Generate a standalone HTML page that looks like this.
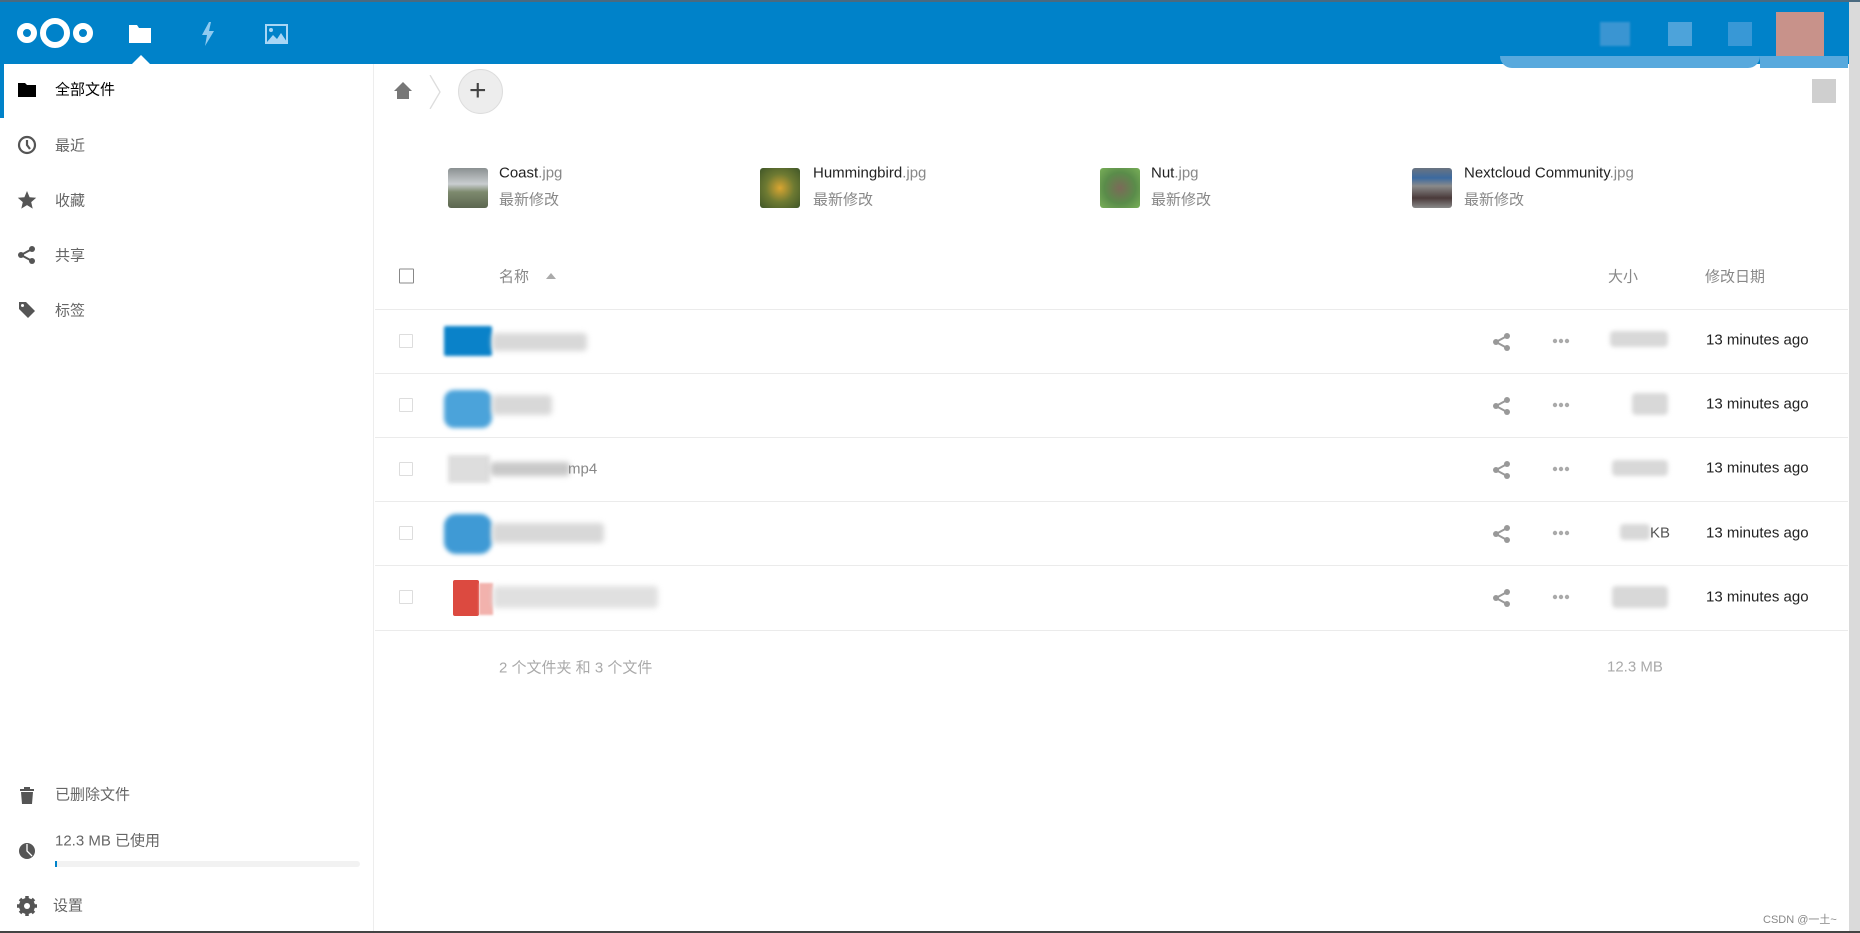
<!DOCTYPE html>
<html><head><meta charset="utf-8"><style>
*{margin:0;padding:0;box-sizing:border-box}
body{width:1860px;height:933px;overflow:hidden;background:#fff;font-family:"Liberation Sans","Noto Sans CJK SC",sans-serif;font-size:15px;color:#222;position:relative}
.hdr{position:absolute;left:0;top:0;width:1860px;height:64px;background:#0082c9;border-top:2px solid #4a6a80}
.a{position:absolute}
.side{position:absolute;left:0;top:64px;width:374px;height:868px;border-right:1px solid #ededed}
.nav{position:absolute;left:55px;color:#666;font-size:15px;transform:translateY(-50%)}
.ico{position:absolute;left:17px;width:20px;height:20px;transform:translateY(-50%)}
.t{position:absolute;transform:translateY(-50%);white-space:nowrap}
.line{position:absolute;left:375px;width:1473px;height:1px;background:#ebebeb}
.cb{position:absolute;left:399px;width:14px;height:14px;border:1px solid #ddd;border-radius:1px;transform:translateY(-50%)}
.blur{position:absolute;filter:blur(3px);background:#d8d8d8;border-radius:4px}
.dots{position:absolute;left:1551px;color:#aaa;font-size:14px;letter-spacing:-1px;transform:translateY(-60%)}
</style></head><body>
<div class="hdr">
 <svg class="a" style="left:15px;top:12px" width="80" height="40" viewBox="0 0 80 40"><g fill="none" stroke="#fff" stroke-width="6"><circle cx="12" cy="19" r="7"/><circle cx="40" cy="19" r="12"/><circle cx="68" cy="19" r="7"/></g></svg>
 <svg class="a" style="left:129px;top:21px" width="22" height="20" viewBox="0 0 22 20"><path d="M0 2h8l2 3h12v15H0z" fill="#fff"/></svg>
 <svg class="a" style="left:130px;top:53px" width="22" height="11" viewBox="0 0 22 11"><path d="M0 11L11 0l11 11z" fill="#fff"/></svg>
 <svg class="a" style="left:200px;top:20px" width="16" height="24" viewBox="0 0 16 24"><path d="M9 0L2 13h5l-2 11 9-15H9l2-9z" fill="#8fcaf0"/></svg>
 <svg class="a" style="left:265px;top:22px" width="23" height="20" viewBox="0 0 23 20"><rect x="1" y="1" width="21" height="18" fill="none" stroke="#a8d6f5" stroke-width="2"/><circle cx="6" cy="6" r="2" fill="#a8d6f5"/><path d="M2 18l6-7 4 4 4-6 6 9z" fill="#a8d6f5"/></svg>
 <div class="a" style="left:1600px;top:20px;width:30px;height:24px;background:#3a95d2;filter:blur(1px)"></div>
 <div class="a" style="left:1668px;top:20px;width:24px;height:24px;background:#4da3da"></div>
 <div class="a" style="left:1728px;top:20px;width:24px;height:24px;background:#3898d6"></div>
 <div class="a" style="left:1776px;top:10px;width:48px;height:44px;background:#c8928a"></div>
</div>
<div class="a" style="left:1500px;top:56px;width:260px;height:12px;background:#58a9dd;border-radius:0 0 30px 30px"></div>
<div class="a" style="left:1760px;top:56px;width:88px;height:12px;background:#58a9dd"></div>
<div class="a" style="left:1849px;top:2px;width:11px;height:930px;background:#dadada"></div>

<div class="side">
 <div class="a" style="left:0;top:0;width:4px;height:54px;background:#0082c9"></div>
</div>
<svg class="ico" style="top:90px" viewBox="0 0 20 20"><path d="M1 3h7l2 2h9v12H1z" fill="#000"/></svg>
<div class="nav" style="top:89px;color:#000">全部文件</div>
<svg class="ico" style="top:145px" viewBox="0 0 20 20"><circle cx="10" cy="10" r="8" fill="none" stroke="#555" stroke-width="2.2"/><path d="M10 5v5l3 4" fill="none" stroke="#555" stroke-width="2.2"/></svg>
<div class="nav" style="top:145px">最近</div>
<svg class="ico" style="top:200px" viewBox="0 0 20 20"><path d="M10 1l2.6 6.2 6.6.5-5 4.4 1.5 6.5L10 15.1l-5.7 3.5 1.5-6.5-5-4.4 6.6-.5z" fill="#555"/></svg>
<div class="nav" style="top:200px">收藏</div>
<svg class="ico" style="top:255px" viewBox="0 0 20 20"><circle cx="15" cy="4" r="3" fill="#555"/><circle cx="4" cy="10" r="3" fill="#555"/><circle cx="15" cy="16" r="3" fill="#555"/><path d="M15 4L4 10l11 6" fill="none" stroke="#555" stroke-width="2"/></svg>
<div class="nav" style="top:255px">共享</div>
<svg class="ico" style="top:310px" viewBox="0 0 20 20"><path d="M2 2h7l9 9-7 7-9-9z" fill="#555"/><circle cx="5.5" cy="5.5" r="1.5" fill="#fff"/></svg>
<div class="nav" style="top:310px">标签</div>
<svg class="ico" style="top:795px" viewBox="0 0 20 20"><path d="M3 4h14v2H3zM7 2h6v2H7zM4 7h12l-1 12H5z" fill="#555"/></svg>
<div class="nav" style="top:794px">已删除文件</div>
<svg class="ico" style="top:851px" viewBox="0 0 20 20"><circle cx="10" cy="10" r="8" fill="#555"/><path d="M10 3v7l5 5" fill="none" stroke="#fff" stroke-width="1.3"/></svg>
<div class="nav" style="top:840px">12.3 MB 已使用</div>
<div class="a" style="left:55px;top:861px;width:305px;height:6px;background:#f2f2f2;border-radius:3px"><div style="width:2px;height:6px;background:#0082c9"></div></div>
<svg class="ico" style="top:906px" viewBox="0 0 20 20"><circle cx="10" cy="10" r="6" fill="none" stroke="#555" stroke-width="4"/><g stroke="#555" stroke-width="3.5"><path d="M10 0v20M0 10h20M3 3l14 14M17 3L3 17"/></g><circle cx="10" cy="10" r="3" fill="#fff"/></svg>
<div class="nav" style="top:905px;left:53px">设置</div>

<svg class="a" style="left:393px;top:81px" width="20" height="20" viewBox="0 0 20 20"><path d="M10 1l9 9h-3v8H4v-8H1z" fill="#777"/></svg>
<svg class="a" style="left:428px;top:75px" width="14" height="34" viewBox="0 0 14 34"><path d="M2 0l10 17L2 34" fill="none" stroke="#ddd" stroke-width="1.3"/></svg>
<div class="a" style="left:458px;top:69px;width:45px;height:45px;border-radius:50%;background:#ededed;border:1px solid #ddd"></div>
<div class="t" style="left:469px;top:91px;font-size:30px;color:#444;line-height:1;font-weight:300">+</div>
<div class="a" style="left:1812px;top:79px;width:24px;height:24px;background:#cfcfcf"></div>

<div class="a" style="left:448px;top:168px;width:40px;height:40px;border-radius:3px;background:linear-gradient(#8a9091 0,#c9cdd0 40%,#7d8a6e 60%,#5c6650)"></div>
<div class="t" style="left:499px;top:173px">Coast<span style="color:#888">.jpg</span></div>
<div class="t" style="left:499px;top:199px;color:#888">最新修改</div>
<div class="a" style="left:760px;top:168px;width:40px;height:40px;border-radius:3px;background:radial-gradient(circle at 50% 50%,#d9a531 0,#6e7a32 50%,#3f5628)"></div>
<div class="t" style="left:813px;top:173px">Hummingbird<span style="color:#888">.jpg</span></div>
<div class="t" style="left:813px;top:199px;color:#888">最新修改</div>
<div class="a" style="left:1100px;top:168px;width:40px;height:40px;border-radius:3px;background:radial-gradient(circle at 50% 50%,#7b6a58 0,#5a8c4a 55%,#79b058)"></div>
<div class="t" style="left:1151px;top:173px">Nut<span style="color:#888">.jpg</span></div>
<div class="t" style="left:1151px;top:199px;color:#888">最新修改</div>
<div class="a" style="left:1412px;top:168px;width:40px;height:40px;border-radius:3px;background:linear-gradient(#6a7480 0,#3b6aa0 25%,#8a8a8a 45%,#4a3a3a 75%,#8a8a8a)"></div>
<div class="t" style="left:1464px;top:173px">Nextcloud Community<span style="color:#888">.jpg</span></div>
<div class="t" style="left:1464px;top:199px;color:#888">最新修改</div>

<div class="cb" style="top:276px;border-color:#888;width:15px;height:15px"></div>
<div class="t" style="left:499px;top:276px;color:#888">名称</div>
<svg class="a" style="left:546px;top:273px" width="10" height="6"><path d="M0 6L5 0l5 6z" fill="#aaa"/></svg>
<div class="t" style="left:1608px;top:276px;color:#888">大小</div>
<div class="t" style="left:1705px;top:276px;color:#888">修改日期</div>

<div class="line" style="top:309px"></div>
<div class="line" style="top:373px"></div>
<div class="line" style="top:437px"></div>
<div class="line" style="top:501px"></div>
<div class="line" style="top:565px"></div>
<div class="line" style="top:630px"></div>

<!-- rows -->
<div class="cb" style="top:341px"></div>
<div class="a" style="left:444px;top:326px;width:48px;height:30px;background:#0a82c9;border-radius:2px;filter:blur(1.5px)"></div>
<div class="blur" style="left:492px;top:333px;width:95px;height:18px"></div>
<div class="cb" style="top:405px"></div>
<div class="a" style="left:444px;top:390px;width:48px;height:38px;background:#4ba3da;border-radius:10px;filter:blur(2px)"></div>
<div class="blur" style="left:492px;top:395px;width:60px;height:20px"></div>
<div class="cb" style="top:469px"></div>
<div class="a" style="left:448px;top:455px;width:42px;height:28px;background:#ddd;filter:blur(2px)"></div>
<div class="blur" style="left:490px;top:462px;width:80px;height:14px;background:#c8c8c8"></div>
<div class="t" style="left:568px;top:469px;color:#888">mp4</div>
<div class="cb" style="top:533px"></div>
<div class="a" style="left:444px;top:514px;width:48px;height:40px;background:#3f9ad5;border-radius:12px;filter:blur(2px)"></div>
<div class="blur" style="left:492px;top:523px;width:112px;height:20px"></div>
<div class="cb" style="top:597px"></div>
<div class="a" style="left:453px;top:580px;width:26px;height:36px;background:#dc4a40;border-radius:2px"></div>
<div class="a" style="left:479px;top:583px;width:14px;height:32px;background:#f2b2ad;filter:blur(1px)"></div>
<div class="blur" style="left:493px;top:586px;width:165px;height:22px;background:#e0e0e0"></div>

<svg class="a" style="left:1492px;top:332px" width="20" height="20" viewBox="0 0 20 20"><g fill="#999"><circle cx="15" cy="4" r="3"/><circle cx="4" cy="10" r="3"/><circle cx="15" cy="16" r="3"/></g><path d="M15 4L4 10l11 6" fill="none" stroke="#999" stroke-width="2"/></svg>
<svg class="a" style="left:1492px;top:396px" width="20" height="20" viewBox="0 0 20 20"><g fill="#999"><circle cx="15" cy="4" r="3"/><circle cx="4" cy="10" r="3"/><circle cx="15" cy="16" r="3"/></g><path d="M15 4L4 10l11 6" fill="none" stroke="#999" stroke-width="2"/></svg>
<svg class="a" style="left:1492px;top:460px" width="20" height="20" viewBox="0 0 20 20"><g fill="#999"><circle cx="15" cy="4" r="3"/><circle cx="4" cy="10" r="3"/><circle cx="15" cy="16" r="3"/></g><path d="M15 4L4 10l11 6" fill="none" stroke="#999" stroke-width="2"/></svg>
<svg class="a" style="left:1492px;top:524px" width="20" height="20" viewBox="0 0 20 20"><g fill="#999"><circle cx="15" cy="4" r="3"/><circle cx="4" cy="10" r="3"/><circle cx="15" cy="16" r="3"/></g><path d="M15 4L4 10l11 6" fill="none" stroke="#999" stroke-width="2"/></svg>
<svg class="a" style="left:1492px;top:588px" width="20" height="20" viewBox="0 0 20 20"><g fill="#999"><circle cx="15" cy="4" r="3"/><circle cx="4" cy="10" r="3"/><circle cx="15" cy="16" r="3"/></g><path d="M15 4L4 10l11 6" fill="none" stroke="#999" stroke-width="2"/></svg>
<svg class="a" style="left:1552px;top:338px" width="18" height="6"><g fill="#aaa"><circle cx="3" cy="3" r="2.2"/><circle cx="9" cy="3" r="2.2"/><circle cx="15" cy="3" r="2.2"/></g></svg>
<svg class="a" style="left:1552px;top:402px" width="18" height="6"><g fill="#aaa"><circle cx="3" cy="3" r="2.2"/><circle cx="9" cy="3" r="2.2"/><circle cx="15" cy="3" r="2.2"/></g></svg>
<svg class="a" style="left:1552px;top:466px" width="18" height="6"><g fill="#aaa"><circle cx="3" cy="3" r="2.2"/><circle cx="9" cy="3" r="2.2"/><circle cx="15" cy="3" r="2.2"/></g></svg>
<svg class="a" style="left:1552px;top:530px" width="18" height="6"><g fill="#aaa"><circle cx="3" cy="3" r="2.2"/><circle cx="9" cy="3" r="2.2"/><circle cx="15" cy="3" r="2.2"/></g></svg>
<svg class="a" style="left:1552px;top:594px" width="18" height="6"><g fill="#aaa"><circle cx="3" cy="3" r="2.2"/><circle cx="9" cy="3" r="2.2"/><circle cx="15" cy="3" r="2.2"/></g></svg>

<div class="blur" style="left:1610px;top:331px;width:58px;height:16px;filter:blur(2px)"></div>
<div class="blur" style="left:1632px;top:393px;width:36px;height:22px;filter:blur(2px)"></div>
<div class="blur" style="left:1612px;top:460px;width:56px;height:16px;filter:blur(2px)"></div>
<div class="blur" style="left:1620px;top:524px;width:30px;height:16px;filter:blur(2px)"></div>
<div class="t" style="left:1650px;top:533px;color:#555">KB</div>
<div class="blur" style="left:1612px;top:586px;width:56px;height:22px;filter:blur(2px)"></div>

<div class="t" style="left:1706px;top:340px">13 minutes ago</div>
<div class="t" style="left:1706px;top:404px">13 minutes ago</div>
<div class="t" style="left:1706px;top:468px">13 minutes ago</div>
<div class="t" style="left:1706px;top:533px">13 minutes ago</div>
<div class="t" style="left:1706px;top:597px">13 minutes ago</div>

<div class="t" style="left:499px;top:667px;color:#aaa">2 个文件夹 和 3 个文件</div>
<div class="t" style="left:1607px;top:667px;color:#aaa">12.3 MB</div>

<div class="t" style="left:1763px;top:919px;font-size:11px;color:#888">CSDN @一土~</div>
<div class="a" style="left:0;top:931px;width:1860px;height:2px;background:#444"></div>
</body></html>
